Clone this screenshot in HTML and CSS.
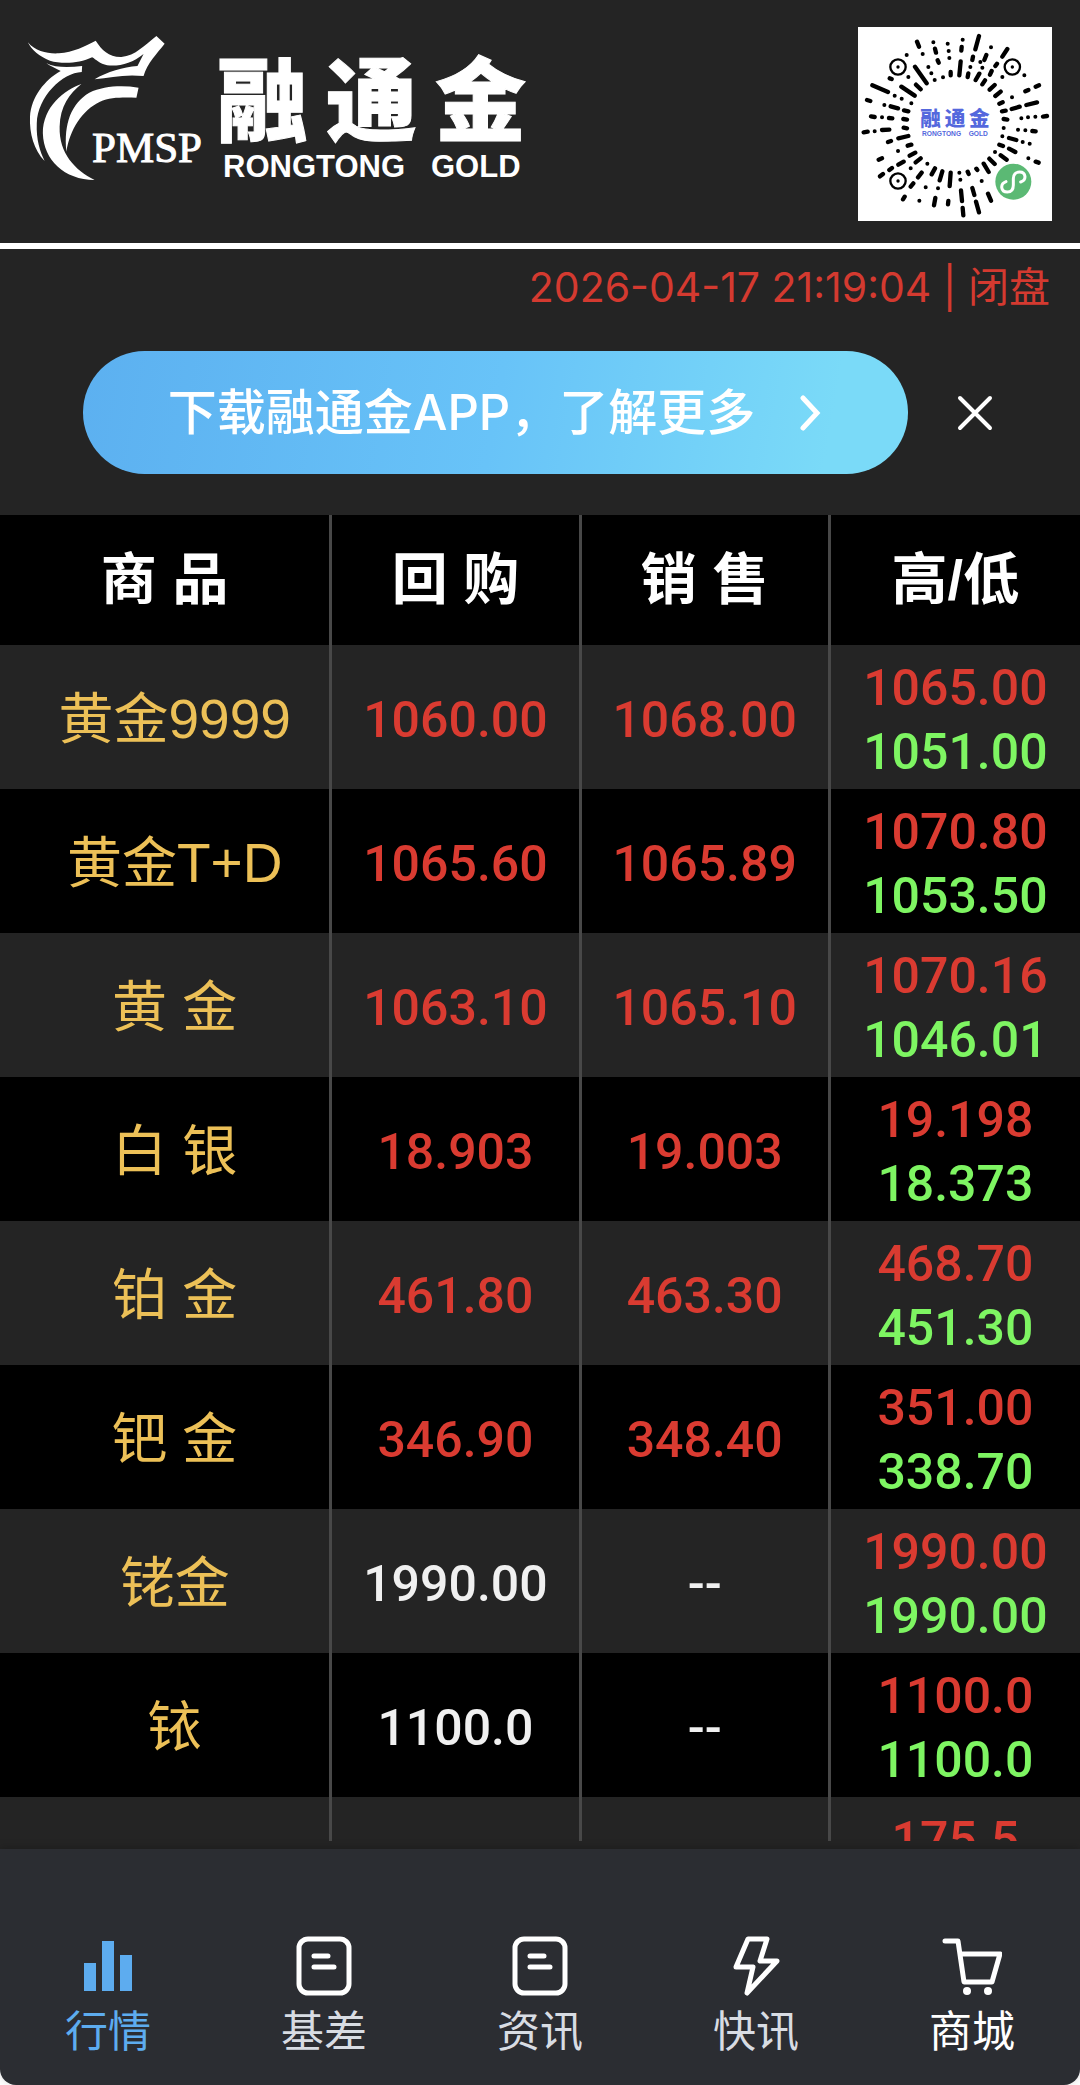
FILE: index.html
```html
<!DOCTYPE html>
<html lang="zh-CN">
<head>
    <meta charset="UTF-8">
    <meta name="viewport" content="width=device-width, initial-scale=1.0">
    <title>融通金 行情</title>
    <link rel="stylesheet" href="styles.css">
</head>
<body>
    <header class="header">
        <svg class="logo" viewBox="28 27 500 160" role="img" aria-label="融通金">
            <g transform="scale(.3571 .3333)">
                <path d="M78 127C100 155 135 162 165 160C205 157 240 138 268 122C285 150 305 172 340 171C380 167 405 135 438 108L461 131C440 160 412 190 402 228C350 222 310 232 265 238C300 215 345 201 385 198L402 162C370 190 335 200 300 196C280 192 268 178 258 172C220 192 170 192 140 182C110 170 88 150 78 127Z"/>
                <path d="M130 190C155 204 195 203 230 198L229 216C175 218 105 290 103 370C101 420 112 455 125 483C95 450 82 400 84 350C88 290 125 240 170 213C155 205 140 198 130 190Z"/>
                <path d="M228 252C180 270 120 320 120 400C122 480 180 540 265 540C210 510 165 460 167 380C168 320 195 280 228 252Z"/>
                <path d="M388 263C340 255 290 258 250 278C200 310 178 370 186 455C195 390 230 330 280 305C310 290 350 293 382 293Z"/>
            </g>
            <text class="logo-pmsp" x="92" y="162">PMSP</text>
            <text class="logo-name" x="217 326 435" y="134">融通金</text>
            <text class="logo-en" x="223" y="177">RONGTONG</text>
            <text class="logo-en" x="431" y="177">GOLD</text>
        </svg>
        <svg class="qrcode" viewBox="55 53 582 582" role="img" aria-label="小程序码">
            <rect x="55" y="53" width="582" height="582" fill="#fff"/>
            <g fill="none" stroke="#000" stroke-linecap="round">
                <path stroke-width="13" d="M232 97L238 112M226 172L261 222M286 118L289 130M294 153L297 160M150 207L156 209M366 113L365 124M363 156L359 198M333 188V198M418 80L407 120M400 142L398 152M386 192L384 203M440 137L434 152M503 119L488 142M472 163L467 170M456 185L451 196M419 193L408 212M436 213L428 225M465 227L450 241M483 247L467 260M98 228L145 248M82 272L92 275M153 291L175 297M185 232L225 259M229 226L243 240M193 303L206 306M191 329L202 331M94 321L105 323M148 326L158 327M72 369L84 367M127 362L149 361M192 355L202 357M176 387L206 380M145 398L154 395M204 409L215 406M117 451L127 447M176 466L192 457M210 439L227 430M121 501L130 494M149 482L157 476M228 459L243 447M235 504L246 490M213 532L221 522M286 477L276 495M308 486L300 513M333 490L330 530M190 570L195 562M287 566L283 588M326 575L325 585M364 543L367 575M369 596L371 618M398 536L404 557M409 577L418 609M445 553L454 574M384 487L387 494M410 478L413 482M432 463L447 488M449 448L465 464M483 438L501 451M508 418L527 428M479 406L490 410M508 386L530 392M516 299L540 292M560 287L592 279M479 283L489 279M487 306L498 304M492 329L503 331M588 232L598 228M557 246L566 242M610 322L622 320M578 365L588 366M588 457L597 460"/>
                <path stroke-width="12" d="M201 137h.1M249 134h.1M281 99h.1M324 103h.1M327 125h.1M329 146h.1M369 91h.1M454 114h.1M422 158h.1M428 175h.1M392 173h.1M266 173h.1M275 192h.1M285 212h.1M310 204h.1M206 203h.1M165 259h.1M186 268h.1M215 282h.1M134 287h.1M127 324h.1M105 366h.1M175 425h.1M213 477h.1M263 463h.1M258 534h.1M295 537h.1M239 574h.1M359 490h.1M362 511h.1M426 515h.1M466 428h.1M488 381h.1M492 356h.1M535 361h.1M557 363h.1M545 327h.1M565 324h.1M587 322h.1M517 264h.1M554 198h.1M488 203h.1M549 398h.1M570 403h.1M566 447h.1"/>
                <path stroke-width="10" d="M175 173h.1M518 173h.1M175 515h.1"/>
                <g stroke-width="7">
                    <circle cx="175" cy="173" r="23"/>
                    <circle cx="518" cy="173" r="23"/>
                    <circle cx="175" cy="515" r="23"/>
                </g>
            </g>
            <text class="qr-name" x="242 315 388" y="349">融通金</text>
            <text class="qr-en" x="247" y="380">RONGTONG</text>
            <text class="qr-en" x="387" y="380">GOLD</text>
            <circle cx="521" cy="517" r="54" fill="#5bb974"/>
            <path d="M499 517C480 524 483 548 503 548C517 548 521 539 521 527V508C521 496 528 488 540 488C559 488 562 512 543 518" fill="none" stroke="#fff" stroke-width="9" stroke-linecap="round"/>
        </svg>
    </header>

    <main class="main">
        <div class="status">2026-04-17 21:19:04 | 闭盘</div>

        <div class="banner">
            <a class="download" href="#">
                <span>下载融通金APP，了解更多</span>
                <svg class="arrow" viewBox="0 0 24 36"><path d="M4 3L18 18L4 33"/></svg>
            </a>
            <button class="close" type="button" aria-label="关闭">
                <svg viewBox="0 0 36 36"><path d="M3 3L33 33M33 3L3 33"/></svg>
            </button>
        </div>

        <table class="quotes">
            <thead>
                <tr><th class="name-col">商 品</th><th>回 购</th><th>销 售</th><th>高/低</th></tr>
            </thead>
            <tbody>
                <tr>
                    <td class="name">黄金9999</td>
                    <td class="up">1060.00</td>
                    <td class="up">1068.00</td>
                    <td><div class="up">1065.00</div><div class="down">1051.00</div></td>
                </tr>
                <tr>
                    <td class="name">黄金T+D</td>
                    <td class="up">1065.60</td>
                    <td class="up">1065.89</td>
                    <td><div class="up">1070.80</div><div class="down">1053.50</div></td>
                </tr>
                <tr>
                    <td class="name">黄 金</td>
                    <td class="up">1063.10</td>
                    <td class="up">1065.10</td>
                    <td><div class="up">1070.16</div><div class="down">1046.01</div></td>
                </tr>
                <tr>
                    <td class="name">白 银</td>
                    <td class="up">18.903</td>
                    <td class="up">19.003</td>
                    <td><div class="up">19.198</div><div class="down">18.373</div></td>
                </tr>
                <tr>
                    <td class="name">铂 金</td>
                    <td class="up">461.80</td>
                    <td class="up">463.30</td>
                    <td><div class="up">468.70</div><div class="down">451.30</div></td>
                </tr>
                <tr>
                    <td class="name">钯 金</td>
                    <td class="up">346.90</td>
                    <td class="up">348.40</td>
                    <td><div class="up">351.00</div><div class="down">338.70</div></td>
                </tr>
                <tr>
                    <td class="name">铑金</td>
                    <td>1990.00</td>
                    <td>--</td>
                    <td><div class="up">1990.00</div><div class="down">1990.00</div></td>
                </tr>
                <tr>
                    <td class="name">铱</td>
                    <td>1100.0</td>
                    <td>--</td>
                    <td><div class="up">1100.0</div><div class="down">1100.0</div></td>
                </tr>
                <tr>
                    <td class="name"></td>
                    <td></td>
                    <td></td>
                    <td><div class="up">175.5</div><div class="down">&nbsp;</div></td>
                </tr>
            </tbody>
        </table>
    </main>

    <nav class="tabbar">
        <a class="tab active" href="#">
            <svg viewBox="0 0 60 60"><path class="solid" d="M6 27h12v28H6zM24 5h12v50H24zM42 19h12v36H42z"/></svg>
            <span>行情</span>
        </a>
        <a class="tab" href="#">
            <svg viewBox="0 0 60 60"><rect x="5" y="3" width="50" height="54" rx="9"/><path d="M20 20H34M20 31H40"/></svg>
            <span>基差</span>
        </a>
        <a class="tab" href="#">
            <svg viewBox="0 0 60 60"><rect x="5" y="3" width="50" height="54" rx="9"/><path d="M20 20H34M20 31H40"/></svg>
            <span>资讯</span>
        </a>
        <a class="tab" href="#">
            <svg viewBox="0 0 60 60"><path d="M22 3H41L34 25H51L21 57L27 31H10Z"/></svg>
            <span>快讯</span>
        </a>
        <a class="tab shop" href="#">
            <svg viewBox="0 0 60 60"><path d="M3 5H16L22 46H50L58 18H18"/><circle class="solid" cx="25" cy="55" r="4"/><circle class="solid" cx="46" cy="55" r="4"/></svg>
            <span>商城</span>
        </a>
    </nav>
</body>
</html>
```
FILE: styles.css
```css
* {
    box-sizing: border-box;
}
body {
    margin: 0;
    height: 100vh;
    display: flex;
    flex-direction: column;
    background: linear-gradient(#242424 90%, #fff 90%);
    color: #fff;
    font-family: "Liberation Sans", "Noto Sans CJK SC", sans-serif;
}
a {
    color: inherit;
    text-decoration: none;
}

/* 顶部 logo */
.header {
    display: flex;
    justify-content: space-between;
    align-items: flex-start;
    padding: 27px 28px 22px;
    border-bottom: 6px solid #fff;
}
.logo {
    width: 500px;
    height: 160px;
    overflow: visible;
    fill: #fff;
}
.logo-pmsp {
    font: 43px "Liberation Serif", serif;
    stroke: #fff;
    stroke-width: 1px;
}
.logo-name {
    font: 900 91px "Noto Sans CJK SC", sans-serif;
    stroke: #fff;
    stroke-width: 1px;
}
.logo-en {
    font: bold 31px "Liberation Sans", sans-serif;
}
.qrcode {
    width: 194px;
    height: 194px;
}
.qr-name {
    font: 900 62px "Noto Sans CJK SC", sans-serif;
    fill: #5468dd;
}
.qr-en {
    font: bold 20px "Liberation Sans", sans-serif;
    fill: #5468dd;
}

/* 中间可滚动区域 */
.main {
    flex: 1;
    min-height: 0;
    margin-bottom: 8px;
    overflow-y: auto;
    scrollbar-width: none;
}
.status {
    padding: 8px 30px;
    font-family: Inter, "Noto Sans CJK SC", sans-serif;
    font-size: 41px;
    line-height: 60px;
    text-align: right;
    color: #d43a30;
}

/* 下载横幅 */
.banner {
    display: flex;
    align-items: center;
    gap: 37px;
    padding: 26px 75px 41px 83px;
}
.download {
    flex: 1;
    display: flex;
    justify-content: center;
    align-items: center;
    gap: 44px;
    height: 123px;
    border-radius: 62px;
    background: linear-gradient(100deg, #5cb0f0, #68c3f8 50%, #7adaf8 90%);
    font-family: Inter, "Noto Sans CJK SC", sans-serif;
    font-size: 49px;
    font-weight: 500;
    line-height: 60px;
}
.arrow {
    width: 24px;
    height: 36px;
    fill: none;
    stroke: #fff;
    stroke-width: 5px;
    stroke-linecap: round;
}
.close {
    width: 60px;
    height: 60px;
    padding: 12px;
    border: none;
    background: none;
    cursor: pointer;
}
.close svg {
    display: block;
    fill: none;
    stroke: #fff;
    stroke-width: 4px;
    stroke-linecap: round;
}

/* 行情表 */
.quotes {
    width: 100%;
    table-layout: fixed;
    border-collapse: separate;
    border-spacing: 0;
    text-align: center;
}
.quotes th,
.quotes td {
    padding: 0;
    border-right: 3px solid #484848;
}
.quotes th:last-child,
.quotes td:last-child {
    border-right: none;
}
.quotes th {
    height: 130px;
    background: #000;
    font-size: 56px;
    line-height: 60px;
}
.quotes .name-col {
    width: calc(100% * 4 / 13);
}
.quotes td {
    height: 144px;
    padding-top: 6px;
    font-family: Roboto, sans-serif;
    font-size: 50px;
    font-weight: 500;
    line-height: 64px;
    color: #f0f0f0;
}
.quotes tbody tr {
    background: #242424;
}
.quotes tbody tr:nth-child(even) {
    background: #000;
}
.quotes .name {
    padding: 4px 0 0 20px;
    font-family: "Liberation Sans", "Noto Sans CJK SC", sans-serif;
    font-size: 55px;
    font-weight: 400;
    color: #ecc057;
}
.quotes .up {
    color: #da3b31;
}
.quotes .down {
    color: #7ef562;
}

/* 底部导航 */
.tabbar {
    display: flex;
    padding: 87px 0 28px;
    border-radius: 0 0 16px 16px;
    background: #2b2d32;
    box-shadow: 0 -2px 8px rgba(0, 0, 0, 0.2);
}
.tab {
    flex: 1;
    display: flex;
    flex-direction: column;
    align-items: center;
    gap: 11px;
    font-size: 43px;
    line-height: 50px;
    color: #d8dce3;
}
.tab svg {
    width: 60px;
    height: 60px;
    fill: none;
    stroke: #fff;
    stroke-width: 5px;
    stroke-linecap: round;
    stroke-linejoin: round;
}
.tab .solid {
    fill: #fff;
    stroke: none;
}
.tab.active {
    color: #5dacef;
}
.tab.active .solid {
    fill: #5dacef;
}
.tab.shop {
    color: #fff;
}
```
